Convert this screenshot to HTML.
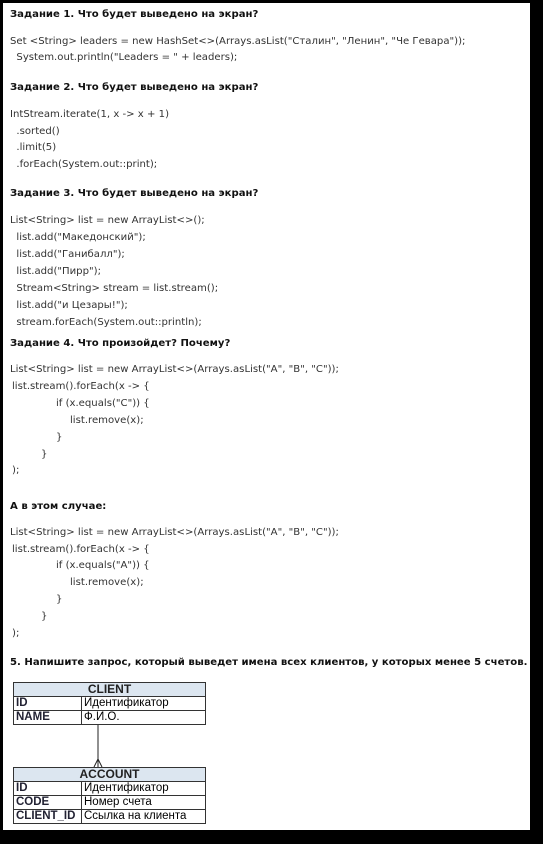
<!DOCTYPE html>
<html><head><meta charset="utf-8"><style>
body{margin:0;width:543px;height:844px;background:#000;position:relative;overflow:hidden}
.pg{position:absolute;left:3px;top:3px;width:527px;height:827px;background:#fff}
.l{position:absolute;white-space:pre;font-family:"DejaVu Sans","Liberation Sans",sans-serif;font-size:10.1px;color:#333;line-height:12px}
.h{font-weight:bold;font-size:10.1px;color:#111}
table{position:absolute;border-collapse:collapse;font-family:"Liberation Sans",sans-serif;font-size:11.5px;left:13px;width:193px}
td{border:1px solid #333;height:13px;padding:0 2px;line-height:13px}
td.k{width:63px;font-weight:bold;color:#223}
th{background:#dce6f0;border:1px solid #333;height:13px;line-height:13px;font-size:12px;padding:0;color:#222}
</style></head><body><div class="pg"></div>
<div class="l h" style="left:10px;top:9px">Задание 1. Что будет выведено на экран?</div>
<div class="l" style="left:10px;top:36px">Set &lt;String&gt; leaders = new HashSet&lt;&gt;(Arrays.asList("Сталин", "Ленин", "Че Гевара"));</div>
<div class="l" style="left:10px;top:52px">  System.out.println("Leaders = " + leaders);</div>
<div class="l h" style="left:10px;top:82px">Задание 2. Что будет выведено на экран?</div>
<div class="l" style="left:10px;top:109px">IntStream.iterate(1, x -&gt; x + 1)</div>
<div class="l" style="left:10px;top:126px">  .sorted()</div>
<div class="l" style="left:10px;top:142px">  .limit(5)</div>
<div class="l" style="left:10px;top:159px">  .forEach(System.out::print);</div>
<div class="l h" style="left:10px;top:188px">Задание 3. Что будет выведено на экран?</div>
<div class="l" style="left:10px;top:215px">List&lt;String&gt; list = new ArrayList&lt;&gt;();</div>
<div class="l" style="left:10px;top:232px">  list.add("Македонский");</div>
<div class="l" style="left:10px;top:249px">  list.add("Ганибалл");</div>
<div class="l" style="left:10px;top:266px">  list.add("Пирр");</div>
<div class="l" style="left:10px;top:283px">  Stream&lt;String&gt; stream = list.stream();</div>
<div class="l" style="left:10px;top:300px">  list.add("и Цезары!");</div>
<div class="l" style="left:10px;top:317px">  stream.forEach(System.out::println);</div>
<div class="l h" style="left:10px;top:338px">Задание 4. Что произойдет? Почему?</div>
<div class="l" style="left:10px;top:364px">List&lt;String&gt; list = new ArrayList&lt;&gt;(Arrays.asList("A", "B", "C"));</div>
<div class="l" style="left:12px;top:381px">list.stream().forEach(x -&gt; {</div>
<div class="l" style="left:56px;top:398px">if (x.equals("C")) {</div>
<div class="l" style="left:70px;top:415px">list.remove(x);</div>
<div class="l" style="left:56px;top:432px">}</div>
<div class="l" style="left:41px;top:449px">}</div>
<div class="l" style="left:12px;top:465px">);</div>
<div class="l h" style="left:10px;top:501px">А в этом случае:</div>
<div class="l" style="left:10px;top:527px">List&lt;String&gt; list = new ArrayList&lt;&gt;(Arrays.asList("A", "B", "C"));</div>
<div class="l" style="left:12px;top:544px">list.stream().forEach(x -&gt; {</div>
<div class="l" style="left:56px;top:560px">if (x.equals("A")) {</div>
<div class="l" style="left:70px;top:577px">list.remove(x);</div>
<div class="l" style="left:56px;top:594px">}</div>
<div class="l" style="left:41px;top:611px">}</div>
<div class="l" style="left:12px;top:628px">);</div>
<div class="l h" style="left:10px;top:657px">5. Напишите запрос, который выведет имена всех клиентов, у которых менее 5 счетов.</div>
<table style="top:682px"><tr><th colspan="2">CLIENT</th></tr><tr><td class="k">ID</td><td>Идентификатор</td></tr><tr><td class="k">NAME</td><td>Ф.И.О.</td></tr></table>
<svg style="position:absolute;left:0;top:0" width="543" height="844"><path d="M98 725V767M94 767L98 759L102 767" stroke="#222" fill="none"/></svg>
<table style="top:767px"><tr><th colspan="2">ACCOUNT</th></tr><tr><td class="k">ID</td><td>Идентификатор</td></tr><tr><td class="k">CODE</td><td>Номер счета</td></tr><tr><td class="k">CLIENT_ID</td><td>Ссылка на клиента</td></tr></table>
</body></html>
